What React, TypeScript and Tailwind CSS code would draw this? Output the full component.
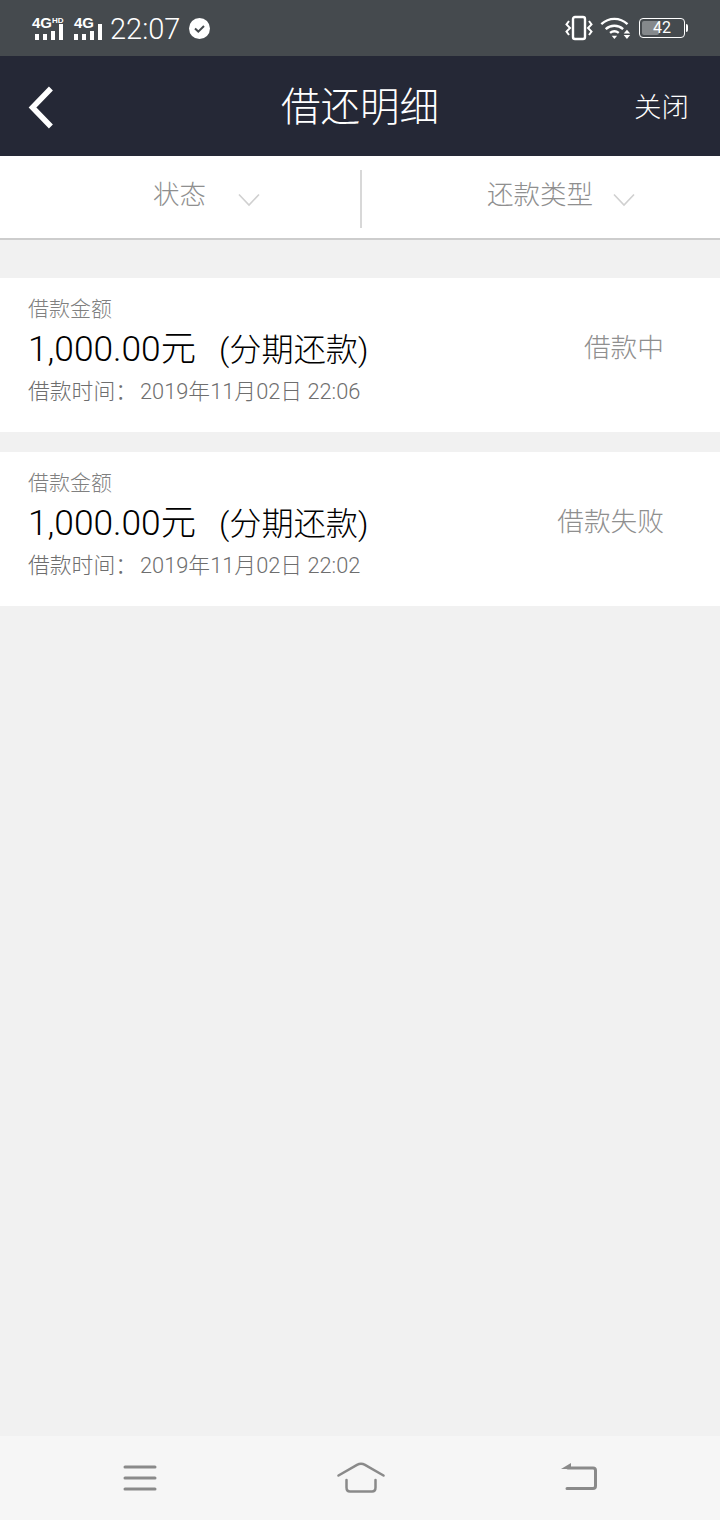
import React from "react";

const FONT = "font-['Roboto','Noto_Sans_CJK_SC',sans-serif]";

const Signal = ({ label, hd = false }: { label: string; hd?: boolean }) => (
  <div className={`flex flex-col ${hd ? "w-[34px]" : "w-[28px]"}`}>
    <div className="flex h-[12px] items-start font-['Liberation_Sans',sans-serif] font-bold leading-[12px] text-white">
      <span className="text-[15px]">{label}</span>
      {hd && <span className="-mt-[1px] text-[8px] leading-[9px]">HD</span>}
    </div>
    <div className={`-mt-[5px] flex h-[16px] items-end gap-[4px] ${hd ? "pl-[3px]" : ""}`}>
      <span className="h-[6px] w-[4px] bg-white" />
      <span className="h-[6px] w-[4px] bg-white" />
      <span className="h-[9px] w-[4px] bg-white" />
      <span className="h-[16px] w-[4px] bg-white" />
    </div>
  </div>
);

const Chevron = () => (
  <svg width="22" height="14" viewBox="0 0 22 14" fill="none">
    <path d="M1 1.500 11 12 21 1.500" stroke="#d0d0d0" strokeWidth="1.600" />
  </svg>
);

const StatusBar = () => (
  <div className="flex h-[56px] items-center justify-between bg-[#454a4e] pl-[32px] pr-[32px]">
    <div className="flex items-center">
      <div className="flex gap-[8px]">
        <Signal label="4G" hd />
        <Signal label="4G" />
      </div>
      <span className="ml-[8px] pt-[3px] font-['Roboto',sans-serif] text-[29px] font-light leading-[53px] text-white">
        22:07
      </span>
      <svg className="ml-[9px]" width="21" height="21" viewBox="0 0 21 21">
        <circle cx="10.500" cy="10.500" r="10.500" fill="#fff" />
        <path d="M6 10.500 9.300 13.600 15 8" fill="none" stroke="#454a4e" strokeWidth="2" />
      </svg>
    </div>
    <div className="flex items-center">
      <svg width="28" height="26" viewBox="0 0 28 26" fill="none" stroke="#fff" strokeWidth="2">
        <rect x="8" y="2" width="12" height="22" rx="2" strokeWidth="2.400" />
        <path d="M4 6 1.500 9.500 5 13 1.500 16.500 4 20M24 6l2.500 3.500L23 13l3.500 3.500L24 20" strokeWidth="2" />
      </svg>
      <svg className="ml-[7px]" width="31" height="24" viewBox="0 0 28 22" fill="none" stroke="#fff" strokeWidth="2.200">
        <path d="M1 7.500C8 1 18 1 25 7.500M5 12c4.500-4 11.500-4 16 0M9 15.500c2.500-2 5.500-2 8 0" />
        <path d="M10.500 18h5L13 21z" fill="#fff" stroke="none" />
        <path d="M24.500 12.500 27.500 16h-6zM24.500 21 21.500 17.500h6z" fill="#fff" stroke="none" />
      </svg>
      <div className="ml-[8px] flex items-center">
        <div className="relative flex h-[20px] w-[46px] items-center justify-center overflow-hidden rounded-[4px] border border-white">
          <div className="absolute left-[2px] top-[2px] h-[14px] w-[17px] rounded-[2px] bg-[#85898c]" />
          <span className="relative font-['Roboto',sans-serif] text-[16px] leading-none text-white">42</span>
        </div>
        <div className="ml-[1px] h-[8px] w-[2px] rounded-r-[2px] bg-white" />
      </div>
    </div>
  </div>
);

const NavBar = () => (
  <div className="grid h-[100px] grid-cols-[1fr_auto_1fr] items-center bg-[#252836] px-[28px] pt-[3px] text-white">
    <svg width="26" height="44" viewBox="0 0 26 44" fill="none">
      <path d="M21 4.500 4.500 21.500 21 38.500" stroke="#fff" strokeWidth="5.500" strokeLinecap="square" />
    </svg>
    <span className="text-[39.500px] font-light leading-none">借还明细</span>
    <span className="mr-[3px] justify-self-end text-[27.500px] font-light leading-none">关闭</span>
  </div>
);

const FilterBar = () => (
  <div className="flex h-[84px] items-center border-b-2 border-[#cdcdcd] bg-white text-[26.500px] font-light text-[#8f8f8f]">
    <div className="flex w-[360px] items-center pb-[4px] pl-[153px]">
      <span className="leading-none">状态</span>
      <span className="ml-[32px] mt-[10px] flex">
        <Chevron />
      </span>
    </div>
    <div className="mt-[4px] h-[58px] w-[2px] bg-[#d8d8d8]" />
    <div className="flex items-center pb-[4px] pl-[125px]">
      <span className="leading-none">还款类型</span>
      <span className="ml-[20px] mt-[10px] flex">
        <Chevron />
      </span>
    </div>
  </div>
);

const LoanCard = ({ time, status }: { time: string; status: string }) => (
  <div className="flex h-[154px] justify-between bg-white pl-[28px] pr-[56px]">
    <div className="flex flex-col pt-[19px]">
      <span className="text-[21px] font-light leading-[24px] text-[#808080]">借款金额</span>
      <span className="mt-[9px] flex items-baseline text-[35.300px] font-light leading-[38px] text-black">
        <span>1,000.00元</span>
        <span className="ml-[23px] text-[32.200px]">(分期还款)</span>
      </span>
      <span className="mt-[10px] flex text-[21.800px] font-light leading-[26px] text-[#6e6e6e]">
        <span>借款时间：</span>
        <span className="ml-[3px]">{time}</span>
      </span>
    </div>
    <span className="pt-[52px] text-[26.700px] font-light leading-[36px] text-[#8f8f8f]">{status}</span>
  </div>
);

const BottomNav = () => (
  <div className="flex h-[84px] items-center bg-[#f6f6f6]">
    <div className="flex w-[281px] justify-start pl-[123px]">
      <svg width="34" height="28" viewBox="0 0 34 28" fill="none" stroke="#8a8a8a" strokeWidth="3" strokeLinecap="round">
        <path d="M2 3h30M2 14h30M2 25h30" />
      </svg>
    </div>
    <div className="flex w-[160px] justify-center">
      <svg width="48" height="32" viewBox="0 0 48 32" fill="none" stroke="#8a8a8a" strokeWidth="2.500" strokeLinecap="round">
        <path d="M1.500 13.500 20 2.800c2.500-1.300 5.500-1.300 8 0L46.500 13.500" />
        <path d="M9.500 18v7.500c0 2.500 1.500 4 3.500 4h22c2 0 3.500-1.500 3.500-4V18" />
      </svg>
    </div>
    <div className="flex flex-1 justify-start pl-[120px]">
      <svg width="36" height="32" viewBox="0 0 36 32" fill="none">
        <path d="M7 6h25c1.500 0 2.500 1 2.500 2.500V24c0 1.500-1 2.500-2.500 2.500H6" stroke="#8a8a8a" strokeWidth="3" strokeLinecap="round" />
        <path d="M0 7 10 1v6z" fill="#8a8a8a" />
      </svg>
    </div>
  </div>
);

export default function App() {
  return (
    <div className={`flex h-[1520px] w-[720px] flex-col bg-[#f1f1f1] ${FONT}`}>
      <StatusBar />
      <NavBar />
      <FilterBar />
      <div className="flex flex-1 flex-col gap-[20px] pt-[38px]">
        <LoanCard time="2019年11月02日 22:06" status="借款中" />
        <LoanCard time="2019年11月02日 22:02" status="借款失败" />
      </div>
      <BottomNav />
    </div>
  );
}
